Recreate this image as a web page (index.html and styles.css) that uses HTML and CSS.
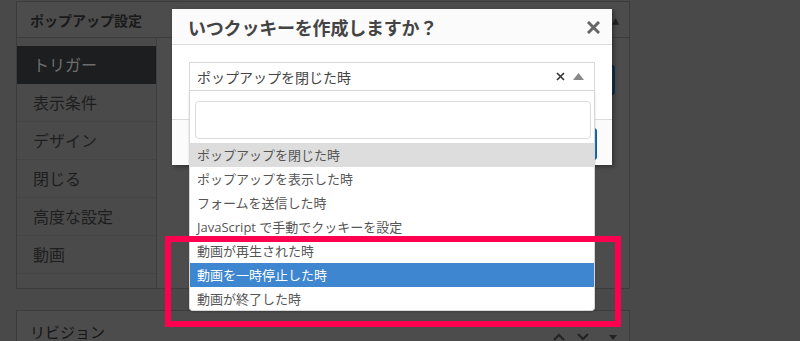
FILE: index.html
```html
<!DOCTYPE html>
<html lang="ja">
<head>
<meta charset="utf-8">
<link rel="stylesheet" href="styles.css">
</head>
<body>
<div class="page">
  <div class="panel">
    <div class="panel-head">
      <span class="panel-title">ポップアップ設定</span>
      <span class="toggle">&#9652;</span>
    </div>
    <div class="panel-body">
      <ul class="side">
        <li class="active">トリガー</li>
        <li>表示条件</li>
        <li>デザイン</li>
        <li>閉じる</li>
        <li>高度な設定</li>
        <li>動画</li>
      </ul>
      <div class="content">
        <div class="bg-btn"></div>
      </div>
    </div>
  </div>
  <div class="panel panel2">
    <div class="panel-head">
      <span class="panel-title light">リビジョン</span>
      <span class="head-icons">
        <svg class="ic-up" width="14" height="10" viewBox="0 0 14 10"><path d="M2 8 L7 3 L12 8" fill="none" stroke="#222" stroke-width="2"/></svg>
        <svg class="ic-down" width="14" height="10" viewBox="0 0 14 10"><path d="M2 2 L7 7 L12 2" fill="none" stroke="#222" stroke-width="2"/></svg>
        <svg width="10" height="10" viewBox="0 0 10 10"><path d="M1 3 L9 3 L5 8 Z" fill="#222"/></svg>
      </span>
    </div>
  </div>
</div>

<div class="modal">
  <div class="modal-head">
    <span class="modal-title">いつクッキーを作成しますか？</span>
    <svg class="close" width="13" height="13" viewBox="0 0 13 13"><path d="M2 2 L11 11 M11 2 L2 11" stroke="#666" stroke-width="3" stroke-linecap="square"/></svg>
  </div>
  <div class="modal-body">
    <div class="select">
      <span class="sel-text">ポップアップを閉じた時</span>
      <span class="sel-icons">
        <svg width="9" height="9" viewBox="0 0 9 9"><path d="M1 1 L8 8 M8 1 L1 8" stroke="#333" stroke-width="1.6"/></svg>
        <svg width="11" height="7" viewBox="0 0 11 7"><path d="M0 7 L5.5 0 L11 7 Z" fill="#888"/></svg>
      </span>
    </div>
  </div>
  <div class="modal-foot">
    <span class="btn"></span>
  </div>
</div>

<div class="dropdown">
  <div class="search"><div class="search-input"></div></div>
  <ul class="options">
    <li class="hl">ポップアップを閉じた時</li>
    <li>ポップアップを表示した時</li>
    <li>フォームを送信した時</li>
    <li>JavaScript で手動でクッキーを設定</li>
    <li>動画が再生された時</li>
    <li class="sel">動画を一時停止した時</li>
    <li>動画が終了した時</li>
  </ul>
</div>

<div class="mark"></div>
</body>
</html>
```

FILE: styles.css
```css
* { box-sizing: border-box; }
html, body { margin: 0; padding: 0; }
body {
  width: 800px;
  height: 341px;
  overflow: hidden;
  background: #494949;
  font-family: "Open Sans", "Noto Sans CJK JP", sans-serif;
  color: #1c1c1c;
  position: relative;
}
ul { list-style: none; margin: 0; padding: 0; }

.page { padding: 1px 0 0 16px; }

.panel {
  width: 614px;
  border: 1px solid #3c3c3c;
  background: #4c4c4c;
}
.panel-head {
  height: 36px;
  border-bottom: 1px solid #3c3c3c;
  display: flex;
  align-items: center;
  justify-content: space-between;
  padding: 0 10px 0 13px;
}
.panel-title {
  font-family: "Noto Sans CJK JP", sans-serif;
  font-size: 14px;
  font-weight: 700;
  color: #1a1a1a;
}
.panel-title.light { font-weight: 400; font-size: 15px; color: #161616; }
.toggle { font-size: 14px; color: #222; }

.panel-body { display: flex; height: 250px; }
.side {
  width: 140px;
  border-right: 1px solid #3e3e3e;
  background: #4a4a4a;
  padding-top: 8px;
}
.side li {
  height: 38px;
  border-bottom: 1px solid #444;
  padding-left: 16px;
  font-family: "Noto Sans CJK JP", sans-serif;
  font-size: 16px;
  line-height: 37px;
  color: #1e1e1e;
}
.side li.active { background: #1d1e20; color: #6e6e6e; border-bottom-color: #1d1e20; }
.content { flex: 1; padding: 27px 14px 0 0; }
.bg-btn {
  margin-left: auto;
  width: 80px;
  height: 30px;
  border: 2px solid #102f4a;
  border-radius: 3px;
  background: #1c3d5a;
}

.panel2 { margin-top: 21px; }
.panel2 .panel-head { border-bottom: none; height: 40px; padding-right: 11px; }
.head-icons { display: flex; align-items: center; padding-top: 12px; }
.ic-up { margin-right: 10px; }
.ic-down { margin-right: 18px; }

/* modal */
.modal {
  position: absolute;
  left: 172px;
  top: 9px;
  width: 440px;
  height: 156px;
  background: #fff;
  box-shadow: 2px 2px 4px rgba(0,0,0,0.35);
  display: flex;
  flex-direction: column;
}
.modal-head {
  height: 36px;
  background: #fbfbfb;
  border-bottom: 1px solid #dcdcdc;
  display: flex;
  align-items: center;
  justify-content: space-between;
  padding: 0 12px 0 16px;
}
.modal-title {
  font-family: "Noto Sans CJK JP", sans-serif;
  font-size: 18px;
  font-weight: 700;
  color: #444;
  letter-spacing: -0.2px;
}
.close { margin-top: 1px; }
.modal-body { height: 74px; padding: 17px 17px 0 17px; }
.select {
  height: 29px;
  border: 1px solid #d8d8d8;
  display: flex;
  align-items: center;
  justify-content: space-between;
  padding: 0 10px 0 7px;
}
.sel-text {
  font-family: "Noto Sans CJK JP", sans-serif;
  font-size: 14px;
  color: #444;
}
.sel-icons { display: flex; align-items: center; gap: 8px; }
.modal-foot {
  flex: 1;
  background: #fbfbfb;
  border-top: 1px solid #dcdcdc;
  display: flex;
  justify-content: flex-end;
  padding: 8px 15px 0 0;
}
.btn {
  width: 90px;
  height: 32px;
  background: #2271b1;
  border: 1px solid #135e96;
  border-radius: 3px;
}

/* dropdown */
.dropdown {
  position: absolute;
  left: 189px;
  top: 91px;
  width: 406px;
  height: 220px;
  background: #fff;
  border: 1px solid #d8d8d8;
  border-top: none;
  border-radius: 0 0 4px 4px;
  box-shadow: 0 1px 2px rgba(0,0,0,0.2);
}
.search { padding: 10px 3px 4px 5px; }
.search-input {
  height: 38px;
  border: 1px solid #dadada;
  border-radius: 4px;
}
.options li {
  height: 24px;
  line-height: 24px;
  padding-left: 7px;
  font-size: 13px;
  color: #555;
}
.options li.hl { background: #dddddd; }
.options li.sel { background: #3e86d0; color: #fff; }

.mark {
  position: absolute;
  left: 165px;
  top: 236px;
  width: 456px;
  height: 91px;
  border: 6px solid #ff0050;
}
```
